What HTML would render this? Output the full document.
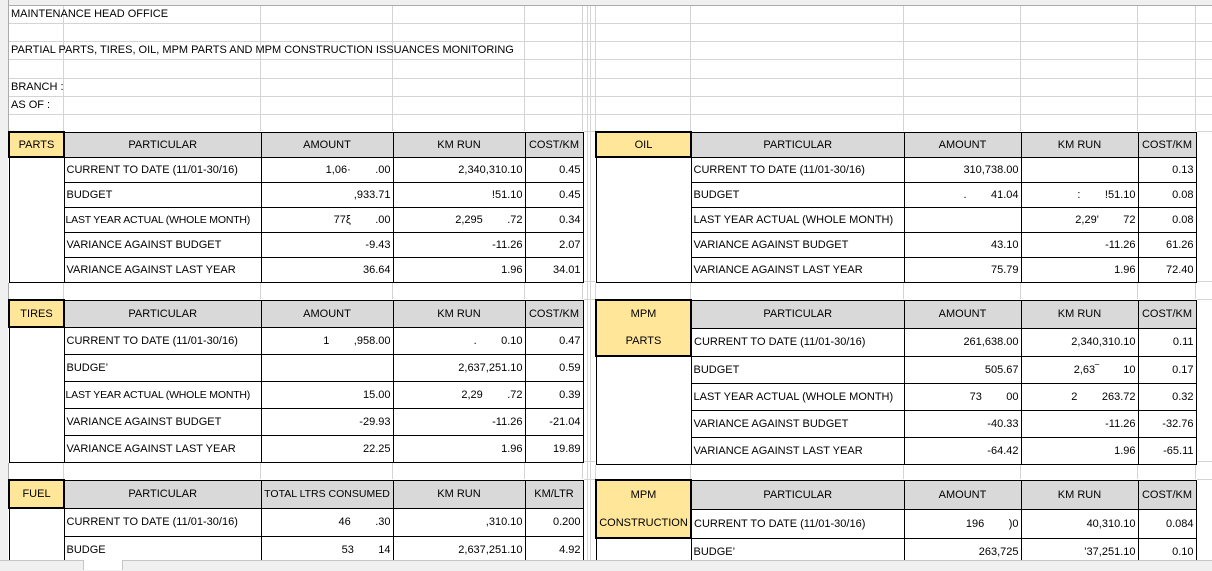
<!DOCTYPE html>
<html><head><meta charset="utf-8"><style>
*{margin:0;padding:0}
body{width:1212px;height:570px;overflow:hidden;background:#fff;position:relative;font:11px "Liberation Sans",sans-serif;color:#000}
.v{position:absolute;top:0;height:560px;width:1px;background:#d4d4d4}
.hl{position:absolute;left:0;width:1212px;height:1px;background:#d4d4d4}
.t{position:absolute;left:11px;font-size:11px;line-height:18px}
table{position:absolute;border-collapse:collapse;table-layout:fixed;background:#fff}
td{border:1px solid #000;padding:0 2px;white-space:pre;overflow:hidden;font-size:11px}
tr.h td{background:#d9d9d9;text-align:center}
tr td.lab{background:#ffe699;border:2px solid #000;text-align:center;padding:0}
td.n{text-align:right}
td.e{border-top:2px solid #000}
td.s{font-size:10.5px;letter-spacing:-0.2px;padding:0 1px}
.clip{position:absolute;left:0;top:0;width:1212px;height:560px;overflow:hidden}
</style></head><body>
<div class="clip">
<div class="v" style="left:63px"></div><div class="v" style="left:260px"></div><div class="v" style="left:392px"></div><div class="v" style="left:524px"></div><div class="v" style="left:582px"></div><div class="v" style="left:587px"></div><div class="v" style="left:590px"></div><div class="v" style="left:595px"></div><div class="v" style="left:690px"></div><div class="v" style="left:903px"></div><div class="v" style="left:1020px"></div><div class="v" style="left:1137px"></div><div class="v" style="left:1195px"></div>
<div class="hl" style="top:23px"></div><div class="hl" style="top:41px"></div><div class="hl" style="top:59px"></div><div class="hl" style="top:78px"></div><div class="hl" style="top:96px"></div><div class="hl" style="top:114px"></div><div class="hl" style="top:131px"></div><div class="hl" style="top:281px"></div><div class="hl" style="top:299px"></div><div class="hl" style="top:461px"></div><div class="hl" style="top:479px"></div>
<div style="position:absolute;left:0;top:0;width:1212px;height:5px;background:#f0f0f0;border-bottom:1px solid #ababab"></div>
<div style="position:absolute;left:0;top:0;width:8px;height:560px;background:#f0f0f0;border-right:1px solid #ababab"></div>
<div class="t" style="top:5px">MAINTENANCE HEAD OFFICE</div>
<div class="t" style="top:41px">PARTIAL PARTS, TIRES, OIL, MPM PARTS AND MPM CONSTRUCTION ISSUANCES MONITORING</div>
<div class="t" style="top:78px">BRANCH :</div>
<div class="t" style="top:96px">AS OF :</div>

<table style="left:8px;top:131px;width:575px">
<col style="width:55px"><col style="width:197px"><col style="width:132px"><col style="width:132px"><col style="width:58px">
<tr class="h" style="height:25px"><td class="lab">PARTS</td><td>PARTICULAR</td><td>AMOUNT</td><td>KM RUN</td><td>COST/KM</td></tr>
<tr style="height:25px"><td rowspan="5" class="e"></td><td>CURRENT TO DATE (11/01-30/16)</td><td class="n">1,06·        .00</td><td class="n">2,340,310.10</td><td class="n">0.45</td></tr>
<tr style="height:25px"><td>BUDGET</td><td class="n">,933.71</td><td class="n">!51.10</td><td class="n">0.45</td></tr>
<tr style="height:25px"><td class="s">LAST YEAR ACTUAL (WHOLE MONTH)</td><td class="n">77ξ        .00</td><td class="n">2,295        .72</td><td class="n">0.34</td></tr>
<tr style="height:25px"><td>VARIANCE AGAINST BUDGET</td><td class="n">-9.43</td><td class="n">-11.26</td><td class="n">2.07</td></tr>
<tr style="height:25px"><td>VARIANCE AGAINST LAST YEAR</td><td class="n">36.64</td><td class="n">1.96</td><td class="n">34.01</td></tr>
</table>

<table style="left:595px;top:131px;width:601px">
<col style="width:95px"><col style="width:213px"><col style="width:117px"><col style="width:117px"><col style="width:58px">
<tr class="h" style="height:25px"><td class="lab">OIL</td><td>PARTICULAR</td><td>AMOUNT</td><td>KM RUN</td><td>COST/KM</td></tr>
<tr style="height:25px"><td rowspan="5" class="e"></td><td>CURRENT TO DATE (11/01-30/16)</td><td class="n">310,738.00</td><td class="n"></td><td class="n">0.13</td></tr>
<tr style="height:25px"><td>BUDGET</td><td class="n">.        41.04</td><td class="n">:        !51.10</td><td class="n">0.08</td></tr>
<tr style="height:25px"><td>LAST YEAR ACTUAL (WHOLE MONTH)</td><td class="n"></td><td class="n">2,29'        72</td><td class="n">0.08</td></tr>
<tr style="height:25px"><td>VARIANCE AGAINST BUDGET</td><td class="n">43.10</td><td class="n">-11.26</td><td class="n">61.26</td></tr>
<tr style="height:25px"><td>VARIANCE AGAINST LAST YEAR</td><td class="n">75.79</td><td class="n">1.96</td><td class="n">72.40</td></tr>
</table>

<table style="left:8px;top:299px;width:575px">
<col style="width:55px"><col style="width:197px"><col style="width:132px"><col style="width:132px"><col style="width:58px">
<tr class="h" style="height:27px"><td class="lab">TIRES</td><td>PARTICULAR</td><td>AMOUNT</td><td>KM RUN</td><td>COST/KM</td></tr>
<tr style="height:27px"><td rowspan="5" class="e"></td><td>CURRENT TO DATE (11/01-30/16)</td><td class="n">1        ,958.00</td><td class="n">.        0.10</td><td class="n">0.47</td></tr>
<tr style="height:27px"><td>BUDGE&#8217;</td><td class="n"></td><td class="n">2,637,251.10</td><td class="n">0.59</td></tr>
<tr style="height:27px"><td class="s">LAST YEAR ACTUAL (WHOLE MONTH)</td><td class="n">15.00</td><td class="n">2,29        .72</td><td class="n">0.39</td></tr>
<tr style="height:27px"><td>VARIANCE AGAINST BUDGET</td><td class="n">-29.93</td><td class="n">-11.26</td><td class="n">-21.04</td></tr>
<tr style="height:27px"><td>VARIANCE AGAINST LAST YEAR</td><td class="n">22.25</td><td class="n">1.96</td><td class="n">19.89</td></tr>
</table>

<table style="left:595px;top:299px;width:601px">
<col style="width:95px"><col style="width:213px"><col style="width:117px"><col style="width:117px"><col style="width:58px">
<tr class="h" style="height:27px"><td class="lab" rowspan="2" style="line-height:27px">MPM<br>PARTS</td><td>PARTICULAR</td><td>AMOUNT</td><td>KM RUN</td><td>COST/KM</td></tr>
<tr style="height:27px"><td>CURRENT TO DATE (11/01-30/16)</td><td class="n">261,638.00</td><td class="n">2,340,310.10</td><td class="n">0.11</td></tr>
<tr style="height:27px"><td rowspan="4" class="e"></td><td>BUDGET</td><td class="n">505.67</td><td class="n">2,63&#8254;        10</td><td class="n">0.17</td></tr>
<tr style="height:27px"><td>LAST YEAR ACTUAL (WHOLE MONTH)</td><td class="n">73        00</td><td class="n">2        263.72</td><td class="n">0.32</td></tr>
<tr style="height:27px"><td>VARIANCE AGAINST BUDGET</td><td class="n">-40.33</td><td class="n">-11.26</td><td class="n">-32.76</td></tr>
<tr style="height:27px"><td>VARIANCE AGAINST LAST YEAR</td><td class="n">-64.42</td><td class="n">1.96</td><td class="n">-65.11</td></tr>
</table>

<table style="left:8px;top:479px;width:575px">
<col style="width:55px"><col style="width:197px"><col style="width:132px"><col style="width:132px"><col style="width:58px">
<tr class="h" style="height:28px"><td class="lab">FUEL</td><td>PARTICULAR</td><td style="font-size:10.5px;padding:0">TOTAL LTRS CONSUMED</td><td>KM RUN</td><td>KM/LTR</td></tr>
<tr style="height:28px"><td rowspan="3" class="e"></td><td>CURRENT TO DATE (11/01-30/16)</td><td class="n">46        .30</td><td class="n">,310.10</td><td class="n">0.200</td></tr>
<tr style="height:28px"><td>BUDGE</td><td class="n">53        14</td><td class="n">2,637,251.10</td><td class="n">4.92</td></tr>
<tr style="height:28px"><td>&nbsp;</td><td></td><td></td><td></td></tr>
</table>

<table style="left:595px;top:479px;width:601px">
<col style="width:95px"><col style="width:213px"><col style="width:117px"><col style="width:117px"><col style="width:58px">
<tr class="h" style="height:28px"><td class="lab" rowspan="2" style="line-height:28px">MPM<br>CONSTRUCTION</td><td>PARTICULAR</td><td>AMOUNT</td><td>KM RUN</td><td>COST/KM</td></tr>
<tr style="height:28px"><td>CURRENT TO DATE (11/01-30/16)</td><td class="n">196        )0</td><td class="n">40,310.10</td><td class="n">0.084</td></tr>
<tr style="height:28px"><td rowspan="2" class="e"></td><td>BUDGE&#8217;</td><td class="n">263,725</td><td class="n">&#8217;37,251.10</td><td class="n">0.10</td></tr>
<tr style="height:28px"><td>&nbsp;</td><td></td><td></td><td></td></tr>
</table>
</div>
<div style="position:absolute;left:0;top:560px;width:1212px;height:10px;background:#f0f0f0;border-top:1px solid #c6c6c6"></div>
<div style="position:absolute;left:83px;top:560px;width:38px;height:10px;background:#fff;border-left:1px solid #c6c6c6;border-right:1px solid #c6c6c6"></div>
</body></html>
